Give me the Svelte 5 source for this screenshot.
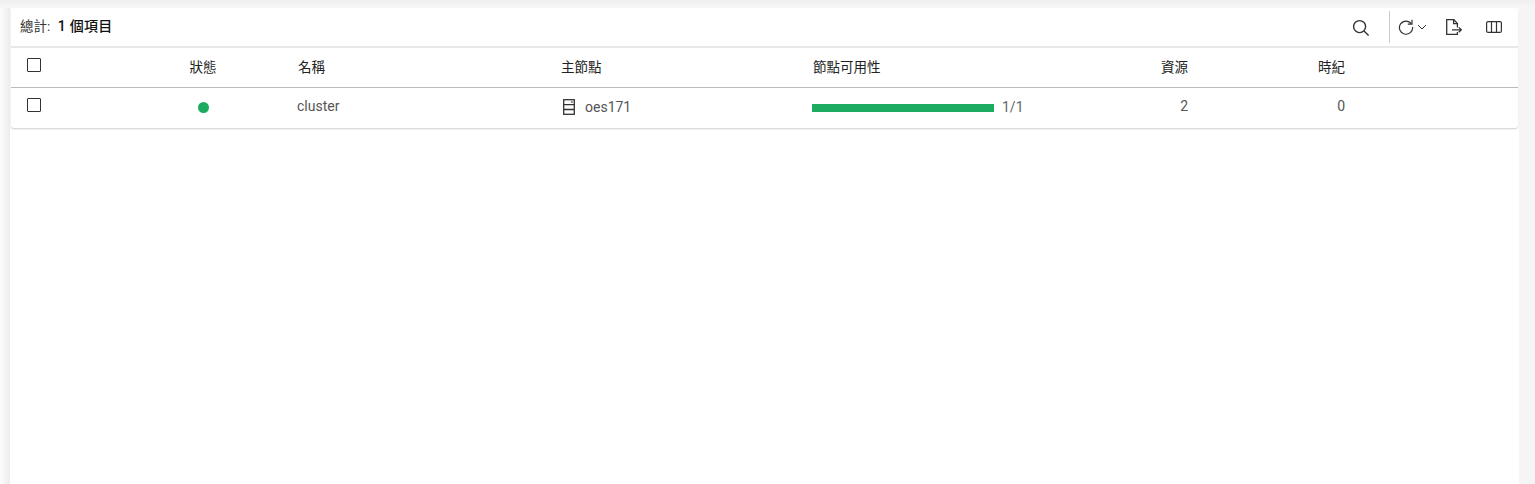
<script>
	const columns = [
		{ key: 'select', label: '' },
		{ key: 'status', label: '狀態' },
		{ key: 'name', label: '名稱' },
		{ key: 'master', label: '主節點' },
		{ key: 'avail', label: '節點可用性' },
		{ key: 'resources', label: '資源' },
		{ key: 'age', label: '時紀' },
		{ key: 'rest', label: '' }
	];

	const row = { name: 'cluster', master: 'oes171', ready: 1, total: 1, resources: 2, age: 0 };
</script>

<div class="page">
	<div class="content">
		<div class="card">
			<div class="toolbar">
				<div class="total">總計: <b>1 個項目</b></div>
				<div class="actions">
					<button class="icon search" aria-label="search">
						<svg width="18" height="18" viewBox="0 0 18 18" fill="none" stroke="#333" stroke-width="1.4">
							<circle cx="7.6" cy="7.6" r="6" />
							<path d="M12 12l4.6 4.6" />
						</svg>
					</button>
					<span class="divider"></span>
					<button class="icon refresh" aria-label="refresh">
						<svg width="16" height="16" viewBox="0 0 16 16" fill="none" stroke="#333" stroke-width="1.2">
							<path d="M13.4 4.8A6.6 6.6 0 1 0 14.6 8" />
							<path d="M14 .8v4.4H9.8" />
						</svg>
						<svg width="10" height="6" viewBox="0 0 10 6" fill="none" stroke="#333" stroke-width="1">
							<path d="M1 1l4 4 4-4" />
						</svg>
					</button>
					<button class="icon export" aria-label="export">
						<svg width="16" height="16" viewBox="0 0 16 16" fill="none" stroke="#333" stroke-width="1.3">
							<path d="M11.4 8.4V4.4L7.8.7H.7v14.6h10.7v-2.4" />
							<path d="M7.6.7v3.9h3.8" />
							<path d="M6 10.8h9M12.8 8.4l2.5 2.4-2.5 2.4" />
						</svg>
					</button>
					<button class="icon cols" aria-label="columns">
						<svg width="16" height="12" viewBox="0 0 16 12" fill="none" stroke="#333" stroke-width="1.2">
							<rect x=".6" y=".6" width="14.8" height="10.8" rx="1.5" />
							<path d="M5.5.6v10.8M10.5.6v10.8" />
						</svg>
					</button>
				</div>
			</div>
			<div class="head grid">
				{#each columns as col}
					<div class="cell {col.key}">
						{#if col.key === 'select'}
							<span class="checkbox"></span>
						{:else}
							{col.label}
						{/if}
					</div>
				{/each}
			</div>
			<div class="row grid">
				<div class="cell select"><span class="checkbox"></span></div>
				<div class="cell status"><span class="dot"></span></div>
				<div class="cell name">{row.name}</div>
				<div class="cell master">
					<svg width="12" height="16" viewBox="0 0 12 16" fill="none" stroke="#333" stroke-width="1.3">
						<rect x=".7" y=".7" width="10.6" height="14.6" />
						<path d="M.7 5.6h10.6M.7 10.5h10.6" />
						<rect x="7.8" y="2" width="2.2" height="2" fill="#999" stroke="none" />
					</svg>
					<span>{row.master}</span>
				</div>
				<div class="cell avail">
					<div class="bar"><div class="fill" style="width: {(row.ready / row.total) * 100}%"></div></div>
					<span class="count">{row.ready}/{row.total}</span>
				</div>
				<div class="cell resources">{row.resources}</div>
				<div class="cell age">{row.age}</div>
				<div class="cell rest"></div>
			</div>
		</div>
	</div>
</div>

<style>
	:global(body) {
		background: #f5f5f5;
		overflow: hidden;
	}

	.page {
		height: 484px;
		padding: 8px 16px 0 10px;
		box-sizing: border-box;
		font-family: Roboto, 'Noto Sans CJK TC', sans-serif;
		font-size: 14px;
		color: #555;
		background: linear-gradient(to right, #fdfdfd, #ececec) 0 8px / 10px 100% no-repeat,
			linear-gradient(to bottom, #efefef, #f6f6f6) 0 0 / 100% 8px no-repeat;
	}

	.content {
		height: 100%;
		background: #fff;
		padding: 0 1px;
		box-sizing: border-box;
		overflow: hidden;
	}

	.card {
		background: #fff;
		border-radius: 3px;
		box-shadow: 0 1px 2px rgba(0, 0, 0, 0.2);
	}

	.toolbar {
		display: flex;
		align-items: center;
		justify-content: space-between;
		height: 38px;
		padding: 0 0 0 9px;
		border-bottom: 2px solid #e8e8e8;
	}

	.total {
		font-size: 13.5px;
		color: #333;
		padding-bottom: 4px;
	}

	.total b {
		font-size: 14px;
		font-weight: 500;
		color: #111;
		margin-left: 4px;
		letter-spacing: 0.3px;
	}

	.actions {
		display: flex;
		align-items: center;
	}

	button.icon {
		display: flex;
		flex: none;
		align-items: center;
		justify-content: center;
		background: none;
		border: none;
		padding: 0;
		gap: 3px;
	}

	button.icon svg {
		flex: none;
	}

	.search {
		width: 18px;
		margin-right: 19px;
		padding-top: 2px !important;
	}

	.divider {
		width: 1px;
		height: 32px;
		background: #ccc;
		margin-right: 8px;
	}

	.refresh {
		margin-right: 19px;
	}

	.export {
		width: 16px;
		margin-right: 24px;
	}

	.cols {
		width: 16px;
		margin-right: 16px;
	}

	.grid {
		display: grid;
		grid-template-columns: 154px 76px 264px 252px 299px 132px 157px 1fr;
	}

	.head {
		height: 39px;
		border-bottom: 1px solid #bbb;
		color: #222;
		font-size: 13.5px;
	}

	.head .cell {
		padding-bottom: 4px;
		box-sizing: border-box;
	}

	.head .name {
		padding-left: 57px;
	}

	.row {
		height: 40px;
		border-radius: 0 0 3px 3px;
	}

	.cell {
		display: flex;
		align-items: center;
		min-width: 0;
	}

	.head .select {
		padding-bottom: 6px;
	}

	.select {
		padding-left: 16px;
	}

	.row .select {
		padding-bottom: 6px;
	}

	.status {
		justify-content: center;
	}

	.row .status,
	.row .master {
		padding-bottom: 2px;
	}

	.row .name,
	.row .resources,
	.row .age {
		padding-bottom: 4px;
	}

	.name,
	.master,
	.avail {
		padding-left: 56px;
	}

	.row .avail {
		padding-left: 55px;
		gap: 8px;
	}

	.count {
		margin-bottom: 2px;
		color: #666;
	}

	.row .master {
		padding-left: 58px;
		gap: 10px;
	}

	.master svg {
		flex: none;
	}

	.resources,
	.age {
		justify-content: flex-end;
	}

	.checkbox {
		display: block;
		width: 12px;
		height: 12px;
		border: 1px solid #333;
		border-radius: 1px;
	}

	.dot {
		width: 11px;
		height: 11px;
		border-radius: 50%;
		background: #1dab60;
	}

	.bar {
		width: 182px;
		height: 8px;
		background: #e5e5e5;
	}

	.fill {
		height: 100%;
		background: #1dab60;
	}
</style>
